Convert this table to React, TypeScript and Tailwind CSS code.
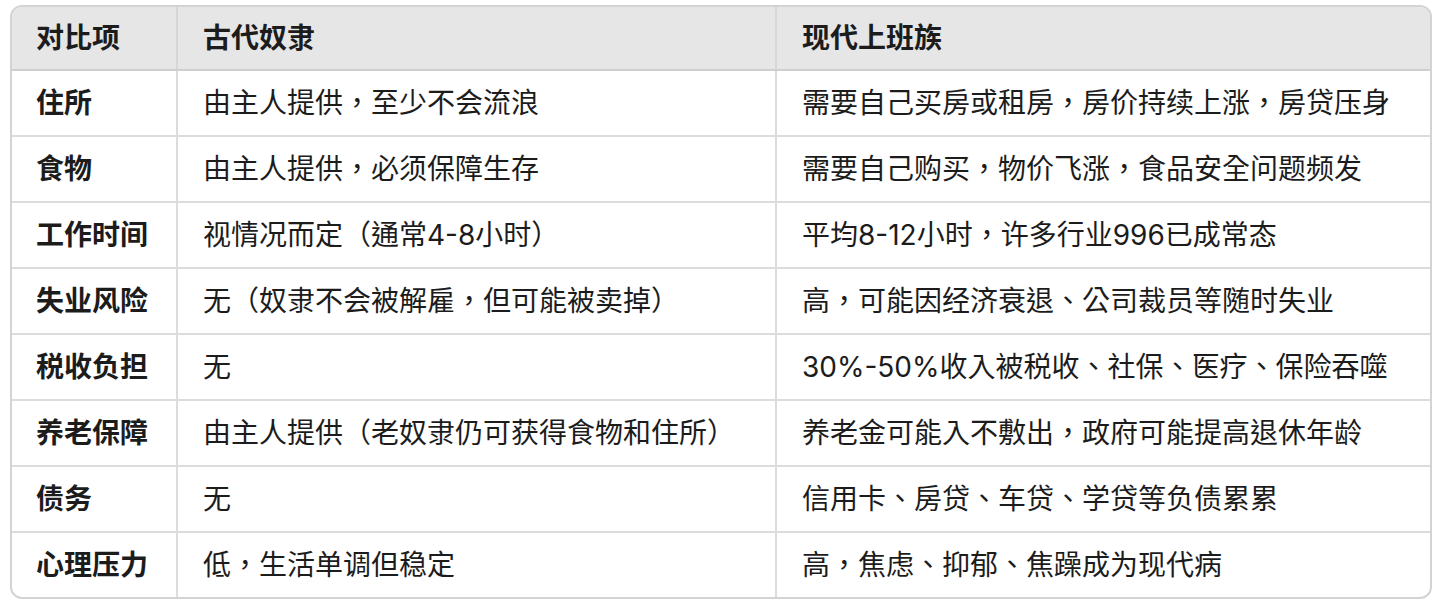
const rows: [string, string, string][] = [
  ['住所', '由主人提供，至少不会流浪', '需要自己买房或租房，房价持续上涨，房贷压身'],
  ['食物', '由主人提供，必须保障生存', '需要自己购买，物价飞涨，食品安全问题频发'],
  ['工作时间', '视情况而定（通常4-8小时）', '平均8-12小时，许多行业996已成常态'],
  ['失业风险', '无（奴隶不会被解雇，但可能被卖掉）', '高，可能因经济衰退、公司裁员等随时失业'],
  ['税收负担', '无', '30%-50%收入被税收、社保、医疗、保险吞噬'],
  ['养老保障', '由主人提供（老奴隶仍可获得食物和住所）', '养老金可能入不敷出，政府可能提高退休年龄'],
  ['债务', '无', '信用卡、房贷、车贷、学贷等负债累累'],
  ['心理压力', '低，生活单调但稳定', '高，焦虑、抑郁、焦躁成为现代病'],
];

export default function App() {
  return (
    <div className="w-[1440px] h-[608px] bg-white pt-[5px] pl-[10px] font-['Inter','Noto_Sans_CJK_TC',sans-serif] text-[#1c1c1c] text-[28px]">
      <div className="w-[1422px] border-2 border-[#d3d3d3] rounded-[12px] overflow-hidden">
        <div className="flex h-[64px] bg-[#e6e6e6] border-b-2 border-[#cfcfcf] font-bold">
          <div className="w-[166px] border-r-2 border-[#d6d6d6] flex items-center pl-[24px]">对比项</div>
          <div className="w-[599px] border-r-2 border-[#d6d6d6] flex items-center pl-[25px]">古代奴隶</div>
          <div className="flex-1 flex items-center pl-[25px]">现代上班族</div>
        </div>
        {rows.map(([a, b, c], i) => (
          <div
            key={a}
            className={`flex ${i < rows.length - 1 ? 'h-[66px] border-b-2 border-[#dcdcdc]' : 'h-[64px]'}`}
          >
            <div className="w-[166px] border-r-2 border-[#dcdcdc] flex items-center pl-[24px] font-bold">{a}</div>
            <div className="w-[599px] border-r-2 border-[#dcdcdc] flex items-center pl-[25px]">{b}</div>
            <div className="flex-1 flex items-center pl-[25px]">{c}</div>
          </div>
        ))}
      </div>
    </div>
  );
}
